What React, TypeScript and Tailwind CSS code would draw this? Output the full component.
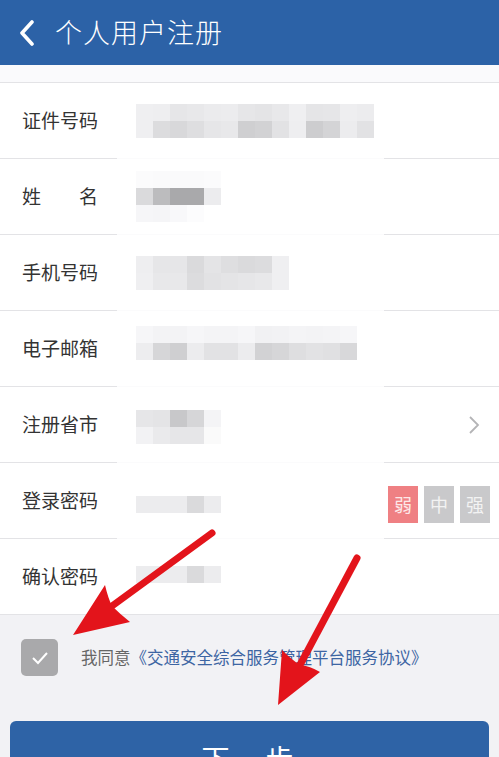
import React from "react";

type Row = {
  label: string;
  mosaic: string[][];
  offset: string;
  extra?: "chevron" | "strength";
};

const rows: Row[] = [
  {
    label: "证件号码",
    offset: "mt-0",
    mosaic: [
      ["#efeff1", "#eeeef0", "#e6e6e8", "#e8e8ea", "#ebebed", "#ececee", "#e6e6e8", "#e4e4e6", "#e8e8ea", "#efeff1", "#e5e5e7", "#e6e6e8", "#eeeef0", "#ececee"],
      ["#efeff1", "#dcdcde", "#d8d8da", "#dedee0", "#e6e6e8", "#e8e8ea", "#cfcfd1", "#d2d2d4", "#e2e2e4", "#eeeef0", "#cdcdcf", "#d4d4d6", "#ececee", "#e2e2e4"],
    ],
  },
  {
    label: "姓名",
    offset: "mt-0",
    mosaic: [
      ["#fbfbfc", "#fafafb", "#fafafb", "#fafafb", "#fbfbfc"],
      ["#dadadc", "#bcbcbe", "#a9a9ab", "#a9a9ab", "#ececee"],
      ["#f6f6f8", "#f5f5f7", "#f8f8fa", "#fcfcfd", "#ffffff"],
    ],
  },
  {
    label: "手机号码",
    offset: "mt-0",
    mosaic: [
      ["#eeeef0", "#e6e6e8", "#e6e6e8", "#dadadc", "#e4e4e6", "#dedee0", "#dadadc", "#dcdcde", "#efeff1"],
      ["#efeff1", "#e8e8ea", "#e8e8ea", "#dcdcde", "#e2e2e4", "#e4e4e6", "#e6e6e8", "#e8e8ea", "#efeff1"],
    ],
  },
  {
    label: "电子邮箱",
    offset: "mt-[-12px]",
    mosaic: [
      ["#f6f6f8", "#f3f3f5", "#f3f3f5", "#f6f6f8", "#f4f4f6", "#f4f4f6", "#f6f6f8", "#f1f1f3", "#f2f2f4", "#f4f4f6", "#f3f3f5", "#f4f4f6", "#f6f6f8"],
      ["#ededef", "#d6d6d8", "#cfcfd1", "#ececee", "#e2e2e4", "#e2e2e4", "#ececee", "#d2d2d4", "#d6d6d8", "#dedee0", "#e2e2e4", "#e0e0e2", "#d8d8da"],
    ],
  },
  {
    label: "注册省市",
    offset: "mt-[4px]",
    extra: "chevron",
    mosaic: [
      ["#e6e6e8", "#e4e4e6", "#c8c8ca", "#d6d6d8", "#f4f4f6"],
      ["#f2f2f4", "#eaeaec", "#e6e6e8", "#e6e6e8", "#fafafa"],
    ],
  },
  {
    label: "登录密码",
    offset: "mt-[8px]",
    extra: "strength",
    mosaic: [["#ececee", "#ececee", "#ececee", "#dadadc", "#ececee"]],
  },
  {
    label: "确认密码",
    offset: "mt-[-4px]",
    mosaic: [["#ececee", "#ececee", "#ececee", "#dadadc", "#ececee"]],
  },
];

function Mosaic({ cells, offset }: { cells: string[][]; offset: string }) {
  return (
    <div className={`flex flex-col ${offset}`}>
      {cells.map((line, i) => (
        <div key={i} className="flex">
          {line.map((c, j) => (
            <div key={j} className="w-[17px] h-[17px]" style={{ backgroundColor: c }} />
          ))}
        </div>
      ))}
    </div>
  );
}

function Separator() {
  return (
    <div className="flex h-px">
      <div className="w-[117px] bg-[#e3e3e6]" />
      <div className="w-[267px] bg-[#fbfbfc]" />
      <div className="flex-1 bg-[#e3e3e6]" />
    </div>
  );
}

function Strength() {
  return (
    <div className="flex gap-[6px] pr-[9px] mt-[8px]">
      <span className="w-[30px] h-[37px] flex items-center justify-center bg-[#ef8083] text-[#fde8e8] text-[18px]">弱</span>
      <span className="w-[30px] h-[37px] flex items-center justify-center bg-[#c9c9cb] text-[#f3f3f3] text-[18px]">中</span>
      <span className="w-[30px] h-[37px] flex items-center justify-center bg-[#c9c9cb] text-[#f3f3f3] text-[18px]">强</span>
    </div>
  );
}

export default function App() {
  return (
    <div
      className="relative w-[499px] h-[757px] overflow-hidden bg-[#f2f2f5]"
      style={{ fontFamily: '"Noto Sans CJK SC", "Noto Sans", sans-serif' }}
    >
      <header className="h-[65px] bg-[#2c62a7] flex items-center">
        <svg width="16" height="26" viewBox="0 0 16 26" className="ml-[19px]">
          <polyline points="13,2 3,13 13,24" fill="none" stroke="white" strokeWidth="3.6" strokeLinecap="round" strokeLinejoin="round" />
        </svg>
        <h1 className="ml-[20px] text-[27px] font-light text-white tracking-[1px]">个人用户注册</h1>
      </header>

      <div className="h-[17px] bg-[#fafafc]" />

      <div className="bg-white border-t border-b border-[#e3e3e6]">
        {rows.map((row, i) => (
          <React.Fragment key={row.label}>
            {i > 0 && <Separator />}
            <div className="h-[75px] flex items-center">
              <div className="w-[136px] pl-[22px] text-[19px] text-[#333]">
                {row.label === "姓名" ? (
                  <span className="flex w-[76px] justify-between">
                    <span>姓</span>
                    <span>名</span>
                  </span>
                ) : (
                  row.label
                )}
              </div>
              <Mosaic cells={row.mosaic} offset={row.offset} />
              <div className="flex-1" />
              {row.extra === "chevron" && (
                <svg width="12" height="20" viewBox="0 0 12 20" className="mr-[19px]">
                  <polyline points="2,2 10,10 2,18" fill="none" stroke="#b4b4b6" strokeWidth="1.8" />
                </svg>
              )}
              {row.extra === "strength" && <Strength />}
            </div>
          </React.Fragment>
        ))}
      </div>

      <div className="flex items-center pt-[24px] pl-[21px]">
        <div className="w-[37px] h-[37px] rounded-[5px] bg-[#a9a9ab] flex items-center justify-center">
          <svg width="18" height="14" viewBox="0 0 18 14">
            <polyline points="2,7 7,12 16,2" fill="none" stroke="white" strokeWidth="2" />
          </svg>
        </div>
        <p className="ml-[23px] text-[16.5px] text-[#666]">
          我同意<span className="text-[#3d65a3]">《交通安全综合服务管理平台服务协议》</span>
        </p>
      </div>

      <div className="px-[10px] mt-[45px]">
        <button className="w-full h-[74px] rounded-[6px] bg-[#2e63a6] text-white text-[28px] tracking-[4px]">
          下一步
        </button>
      </div>

      {/* red annotation arrows */}
      <svg className="absolute inset-0 pointer-events-none" width="499" height="757" viewBox="0 0 499 757">
        <line x1="212" y1="533" x2="112" y2="606" stroke="#e3141b" strokeWidth="7" strokeLinecap="round" />
        <path d="M73 635 L105 585 Q108 598 112 606 Q120 614 130 622 Z" fill="#e3141b" />
        <line x1="357" y1="558" x2="300" y2="665" stroke="#e3141b" strokeWidth="7" strokeLinecap="round" />
        <path d="M278 705 L282 650 Q292 660 300 665 Q310 666 320 672 Z" fill="#e3141b" />
      </svg>
    </div>
  );
}
